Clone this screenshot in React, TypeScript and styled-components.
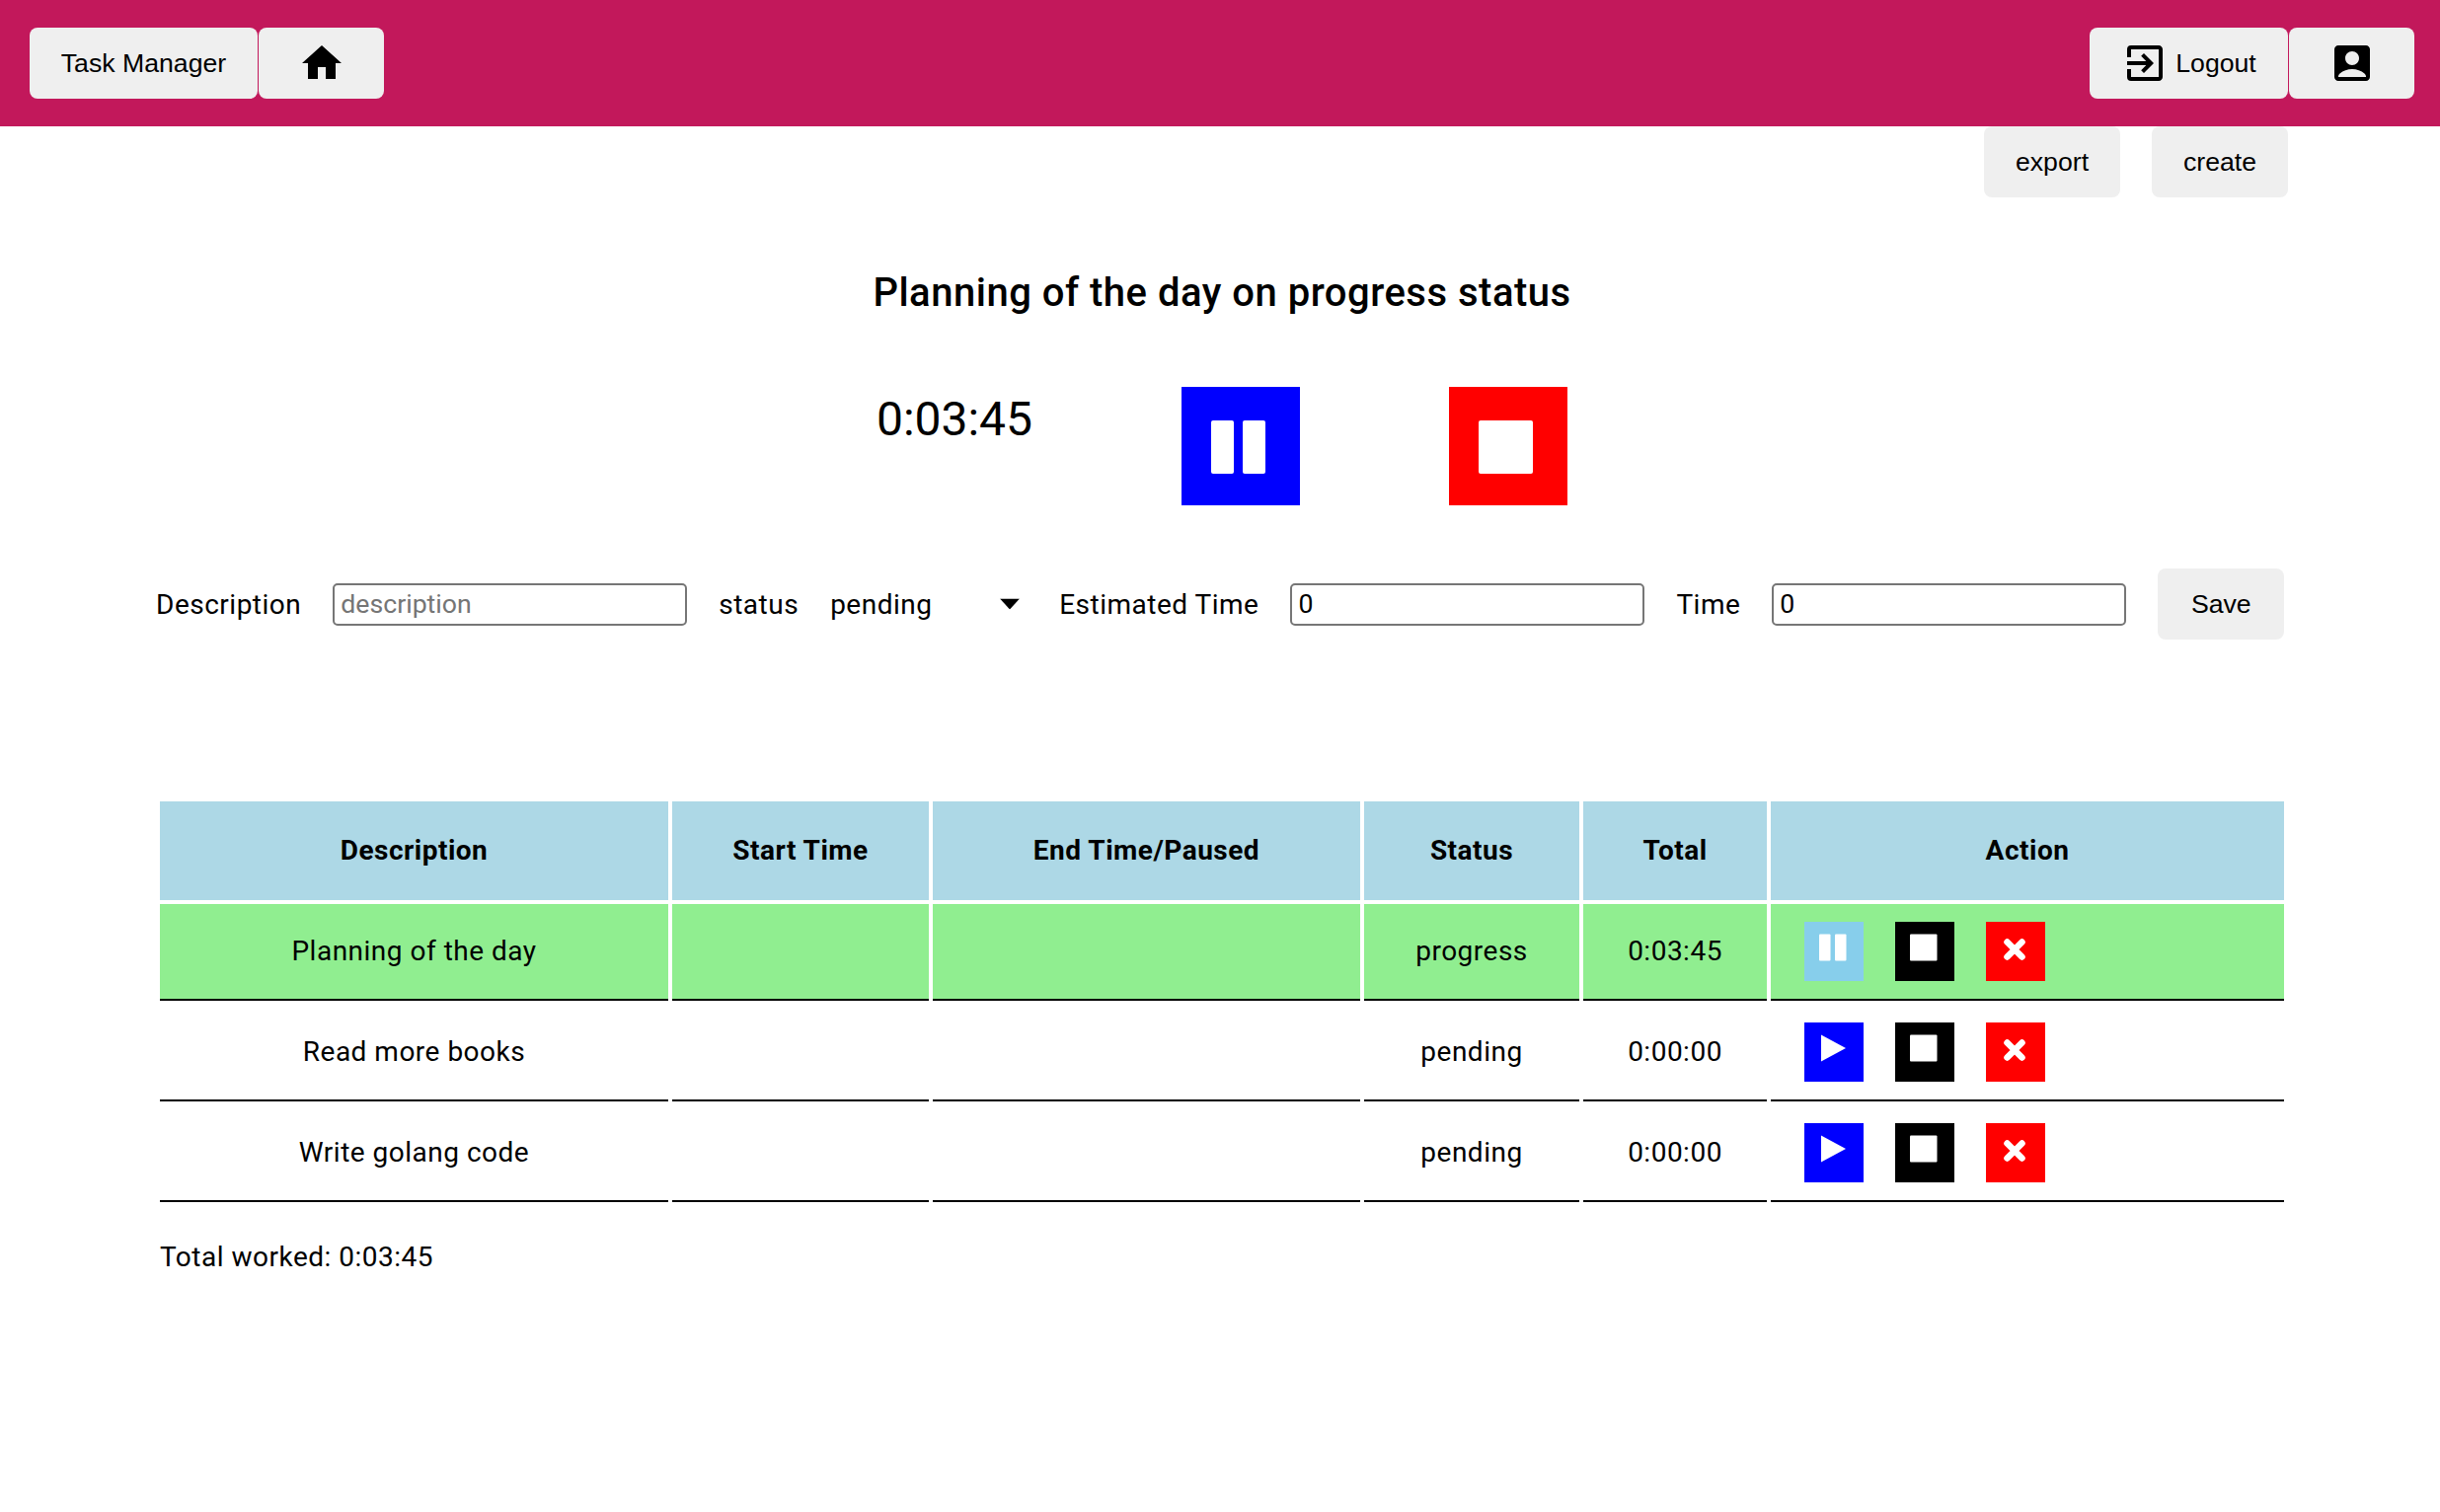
import React from "react";
import styled, { createGlobalStyle } from "styled-components";
import { MdAccountBox, MdExitToApp, MdHome } from "react-icons/md";

const tasks = [
  { description: "Planning of the day", status: "progress", total: "0:03:45", active: true },
  { description: "Read more books", status: "pending", total: "0:00:00", active: false },
  { description: "Write golang code", status: "pending", total: "0:00:00", active: false },
];

const PauseIcon = ({ size }: { size: number }) => (
  <svg width={size} height={size} viewBox="0 0 56 56" fill="#fff">
    <rect x="0" y="1" width="23" height="54" rx="2" />
    <rect x="32" y="1" width="23" height="54" rx="2" />
  </svg>
);

const StopIcon = ({ size }: { size: number }) => (
  <svg width={size} height={size} viewBox="0 0 56 56" fill="#fff">
    <rect x="0" y="1" width="55" height="54" rx="2" />
  </svg>
);

const PlayIcon = ({ size }: { size: number }) => (
  <svg width={size} height={size} viewBox="0 0 56 56" fill="#fff">
    <path d="M4 1L54 28L4 55z" />
  </svg>
);

const CloseIcon = ({ size }: { size: number }) => (
  <svg width={size} height={size} viewBox="0 0 56 56" stroke="#fff" strokeWidth="13" strokeLinecap="round">
    <path d="M13 17L43 47M43 17L13 47" />
  </svg>
);

const App: React.FC = () => {
  return (
    <>
      <GlobalStyle />
      <TopBar>
        <BarGroup>
          <BrandButton>Task Manager</BrandButton>
          <BarIconButton>
            <MdHome size={48} />
          </BarIconButton>
        </BarGroup>
        <BarGroup>
          <LogoutButton>
            <MdExitToApp size={48} />
            Logout
          </LogoutButton>
          <BarIconButton>
            <MdAccountBox size={48} />
          </BarIconButton>
        </BarGroup>
      </TopBar>
      <Main>
        <PageActions>
          <FlatButton>export</FlatButton>
          <FlatButton>create</FlatButton>
        </PageActions>
        <Title>Planning of the day on progress status</Title>
        <TimerRow>
          <Timer>0:03:45</Timer>
          <TimerButton $color="#0000ff">
            <PauseIcon size={56} />
          </TimerButton>
          <TimerButton $color="#ff0000">
            <StopIcon size={56} />
          </TimerButton>
        </TimerRow>
        <EditForm>
          <span>Description</span>
          <TextInput placeholder="description" />
          <span>status</span>
          <SelectBox>
            <StatusSelect defaultValue="pending">
              <option value="pending">pending</option>
              <option value="progress">progress</option>
            </StatusSelect>
            <Caret viewBox="0 0 20 11">
              <path d="M0 0H20L10 11z" />
            </Caret>
          </SelectBox>
          <span>Estimated Time</span>
          <TextInput defaultValue="0" />
          <span>Time</span>
          <TextInput defaultValue="0" />
          <SaveButton>Save</SaveButton>
        </EditForm>
        <TaskTable>
          <colgroup>
            <col style={{ width: 515 }} />
            <col style={{ width: 260 }} />
            <col style={{ width: 433 }} />
            <col style={{ width: 218 }} />
            <col style={{ width: 186 }} />
            <col />
          </colgroup>
          <thead>
            <tr>
              <HeadCell>Description</HeadCell>
              <HeadCell>Start Time</HeadCell>
              <HeadCell>End Time/Paused</HeadCell>
              <HeadCell>Status</HeadCell>
              <HeadCell>Total</HeadCell>
              <HeadCell>Action</HeadCell>
            </tr>
          </thead>
          <tbody>
            {tasks.map((task) => (
              <tr key={task.description}>
                <BodyCell $active={task.active}>{task.description}</BodyCell>
                <BodyCell $active={task.active} />
                <BodyCell $active={task.active} />
                <BodyCell $active={task.active}>{task.status}</BodyCell>
                <BodyCell $active={task.active}>{task.total}</BodyCell>
                <ActionCell $active={task.active}>
                  <ActionList>
                    <ActionButton $color={task.active ? "#87ceeb" : "#0000ff"}>
                      {task.active ? <PauseIcon size={28} /> : <PlayIcon size={28} />}
                    </ActionButton>
                    <ActionButton $color="#000000">
                      <StopIcon size={28} />
                    </ActionButton>
                    <ActionButton $color="#ff0000">
                      <CloseIcon size={28} />
                    </ActionButton>
                  </ActionList>
                </ActionCell>
              </tr>
            ))}
          </tbody>
        </TaskTable>
        <TotalWorked>Total worked: 0:03:45</TotalWorked>
      </Main>
    </>
  );
};

export default App;

const GlobalStyle = createGlobalStyle`
  body {
    margin: 0;
    background: #fff;
    color: #000;
    font-family: Roboto, sans-serif;
    font-size: 28px;
    letter-spacing: 0.5px;
  }
`;

const TopBar = styled.header`
  align-items: center;
  background-color: #c2185b;
  box-sizing: border-box;
  display: flex;
  height: 128px;
  justify-content: space-between;
  padding: 0 26px 0 30px;
`;

const BarGroup = styled.div`
  display: flex;
  gap: 1px;
`;

const BarButton = styled.button`
  align-items: center;
  background-color: #efefef;
  border: none;
  border-radius: 8px;
  color: #000;
  display: flex;
  font-family: "Liberation Sans", Arial, sans-serif;
  font-size: 26.67px;
  height: 72px;
  justify-content: center;
  letter-spacing: 0;
  padding: 0;
`;

const BrandButton = styled(BarButton)`
  width: 231px;
`;

const BarIconButton = styled(BarButton)`
  width: 127px;
`;

const LogoutButton = styled(BarButton)`
  gap: 7px;
  width: 201px;
`;

const Main = styled.main`
  margin-left: 158px;
  width: 2160px;
`;

const PageActions = styled.div`
  display: flex;
  gap: 32px;
  justify-content: flex-end;
`;

const FlatButton = styled(BarButton)`
  width: 138px;
`;

const Title = styled.h2`
  font-size: 40px;
  font-weight: 500;
  line-height: 48px;
  margin: 73px 0 0;
  text-align: center;
`;

const TimerRow = styled.div`
  align-items: flex-start;
  display: flex;
  gap: 151px;
  justify-content: center;
  margin-top: 71px;
`;

const Timer = styled.div`
  font-size: 48px;
  letter-spacing: 0;
  line-height: 56px;
  padding-top: 5px;
`;

const TimerButton = styled.button<{ $color: string }>`
  align-items: center;
  background-color: ${(p) => p.$color};
  border: none;
  display: flex;
  height: 120px;
  justify-content: center;
  padding: 2px 5px 0 0;
  width: 120px;
`;

const EditForm = styled.form`
  align-items: center;
  display: flex;
  gap: 32px;
  margin-top: 64px;
`;

const TextInput = styled.input`
  border: 2px solid #767676;
  border-radius: 5px;
  box-sizing: border-box;
  font-family: Roboto, sans-serif;
  font-size: 26.67px;
  height: 43px;
  letter-spacing: 0;
  padding: 0 6px;
  width: 359px;
`;

const SelectBox = styled.div`
  position: relative;
  width: 200px;
`;

const StatusSelect = styled.select`
  appearance: none;
  background: #fff;
  border: none;
  color: #000;
  display: block;
  font-family: Roboto, sans-serif;
  font-size: 28px;
  letter-spacing: 0.5px;
  padding: 0;
  width: 100%;
`;

const Caret = styled.svg`
  height: 11px;
  pointer-events: none;
  position: absolute;
  right: 8px;
  top: 50%;
  transform: translateY(-50%);
  width: 20px;
`;

const SaveButton = styled(BarButton)`
  width: 128px;
`;

const TaskTable = styled.table`
  border-spacing: 4px;
  margin-top: 160px;
  table-layout: fixed;
  width: 2160px;
`;

const HeadCell = styled.th`
  background-color: #add8e6;
  box-sizing: border-box;
  font-size: 28px;
  font-weight: 700;
  height: 100px;
  padding: 0 0 2px;
  text-align: center;
`;

const BodyCell = styled.td<{ $active: boolean }>`
  background-color: ${(p) => (p.$active ? "#90ee90" : "transparent")};
  border-bottom: 2px solid #000;
  box-sizing: border-box;
  height: 98px;
  padding: 0 0 2px;
  text-align: center;
`;

const ActionCell = styled(BodyCell)`
  padding: 0 0 0 34px;
`;

const ActionList = styled.div`
  display: flex;
  gap: 32px;
`;

const ActionButton = styled.button<{ $color: string }>`
  align-items: center;
  background-color: ${(p) => p.$color};
  border: none;
  display: flex;
  height: 60px;
  justify-content: center;
  padding: 0 2px 9px 0;
  width: 60px;
`;

const TotalWorked = styled.p`
  line-height: 32px;
  margin: 36px 0 0 4px;
`;
